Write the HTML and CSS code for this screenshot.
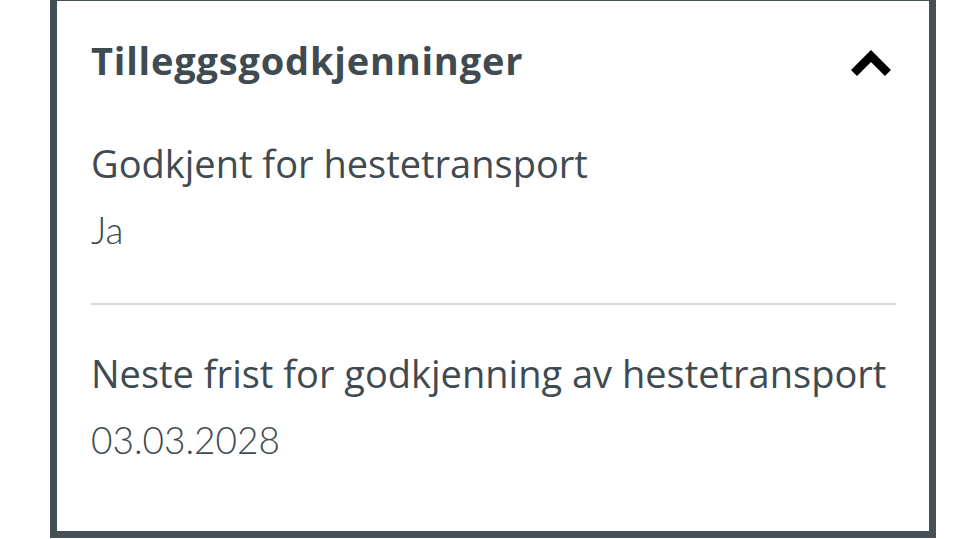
FILE: index.html
```html
<!DOCTYPE html>
<html lang="no">
<head>
    <meta charset="UTF-8">
    <meta name="viewport" content="width=device-width, initial-scale=1.0">
    <title>Tilleggsgodkjenninger</title>
    <link rel="stylesheet" href="styles.css">
</head>
<body>
    <div class="card">
        <div class="card-header">
            <h2>Tilleggsgodkjenninger</h2>
            <svg class="chevron" width="40" height="27" viewBox="0 0 40 27" aria-hidden="true">
                <polyline points="3,23 20,6 37,23" fill="none" stroke="#000" stroke-width="8.5"/>
            </svg>
        </div>
        <div class="field">
            <div class="field-label">Godkjent for hestetransport</div>
            <div class="field-value">Ja</div>
        </div>
        <div class="field">
            <div class="field-label">Neste frist for godkjenning av hestetransport</div>
            <div class="field-value">03.03.2028</div>
        </div>
    </div>
</body>
</html>
```

FILE: styles.css
```css
body {
    font-family: "Open Sans", Lato, sans-serif;
    background-color: #fff;
    margin: 0;
    overflow: hidden;
}

.card {
    width: 805px;
    height: 530px;
    margin: -6px 0 0 50px;
    border: 7px solid #444f56;
    background: #fff;
    padding: 0 33px 0 34px;
    color: #3f4a51;
}

.card-header {
    display: flex;
    align-items: center;
    justify-content: space-between;
    padding-top: 35px;
}

.card-header h2 {
    margin: 0;
    font-size: 38px;
    font-weight: 700;
    line-height: 48px;
    letter-spacing: 0.8px;
}

.chevron {
    margin: 7px 5px 0 0;
}

.field {
    padding: 55px 0 49px;
}

.field + .field {
    border-top: 2px solid #dadada;
    padding-top: 44px;
}

.field-label {
    font-size: 38px;
    line-height: 48px;
}

.field-value {
    font-family: Lato, "Open Sans", sans-serif;
    font-size: 37px;
    font-weight: 300;
    line-height: 48px;
    margin-top: 19px;
}
```
